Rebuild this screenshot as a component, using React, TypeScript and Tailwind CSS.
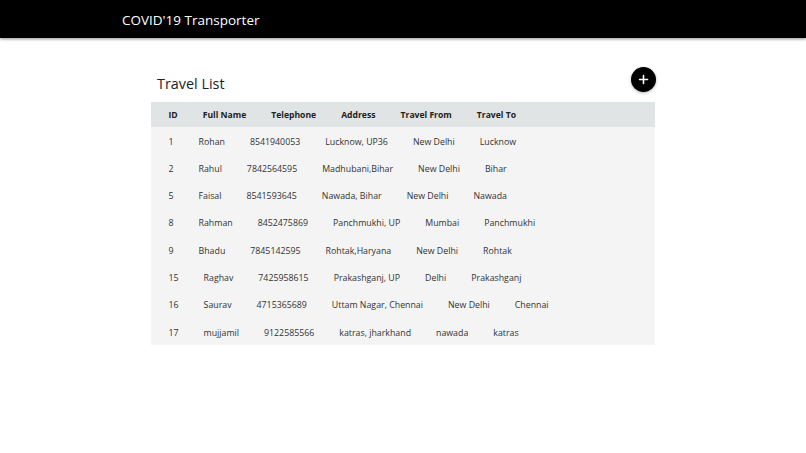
import React from "react";

const rows = [
  ["1", "Rohan", "8541940053", "Lucknow, UP36", "New Delhi", "Lucknow"],
  ["2", "Rahul", "7842564595", "Madhubani,Bihar", "New Delhi", "Bihar"],
  ["5", "Faisal", "8541593645", "Nawada, Bihar", "New Delhi", "Nawada"],
  ["8", "Rahman", "8452475869", "Panchmukhi, UP", "Mumbai", "Panchmukhi"],
  ["9", "Bhadu", "7845142595", "Rohtak,Haryana", "New Delhi", "Rohtak"],
  ["15", "Raghav", "7425958615", "Prakashganj, UP", "Delhi", "Prakashganj"],
  ["16", "Saurav", "4715365689", "Uttam Nagar, Chennai", "New Delhi", "Chennai"],
  ["17", "mujjamil", "9122585566", "katras, jharkhand", "nawada", "katras"],
];

const headers = ["ID", "Full Name", "Telephone", "Address", "Travel From", "Travel To"];

export default function App() {
  return (
    <div className="min-h-screen bg-white font-['Open_Sans',sans-serif]">
      <div className="h-[38px] bg-black flex items-center pl-[122px] pt-[3px] shadow-[0_1px_3px_rgba(0,0,0,0.45)] relative z-10">
        <span className="text-white text-[13.5px]">COVID'19 Transporter</span>
      </div>
      <div className="w-[504px] mx-auto pt-[29px]">
        <div className="h-[35px] flex justify-between items-start">
          <h1 className="mt-[7px] ml-[6px] text-[14.4px] leading-[20px] text-[#222]">Travel List</h1>
          <button className="w-[25px] h-[25px] mr-[-1px] rounded-full bg-black flex items-center justify-center shadow-[0_1px_3px_rgba(0,0,0,0.3)]">
            <svg width="11" height="11" viewBox="0 0 11 11">
              <path d="M5.5 1.5v8M1.5 5.5h8" stroke="white" strokeWidth="1.6" strokeLinecap="round" />
            </svg>
          </button>
        </div>
        <div className="bg-[#f4f4f4]">
          <div className="h-[25px] bg-[#e0e4e4] flex items-center pl-[5px] pt-[1px]">
            {headers.map((h) => (
              <div key={h} className="px-[12.5px] text-[8.6px] font-bold text-[#222] whitespace-nowrap">
                {h}
              </div>
            ))}
          </div>
          {rows.map((r) => (
            <div key={r[0]} className="h-[27.3px] flex items-center pl-[5px] pt-[3px]">
              {r.map((c, i) => (
                <div key={i} className="px-[12.5px] text-[8.8px] text-[#333] whitespace-nowrap">
                  {c}
                </div>
              ))}
            </div>
          ))}
        </div>
      </div>
    </div>
  );
}
